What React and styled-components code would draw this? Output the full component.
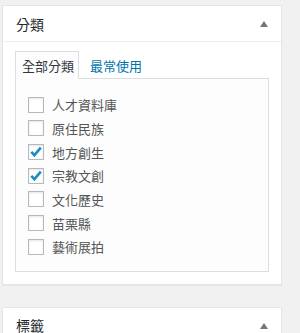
import React, { useState } from "react";
import styled, { createGlobalStyle } from "styled-components";

const GlobalStyle = createGlobalStyle`
  html, body {
    margin: 0;
    padding: 0;
    background: #f1f1f1;
    font-family: "Noto Sans CJK TC", "Noto Sans", sans-serif;
    color: #444;
  }
`;

const Page = styled.div`
  display: flex;
  flex-direction: column;
  gap: 22px;
  padding: 5px 0 0 2px;
`;

const Postbox = styled.div`
  width: 280px;
  box-sizing: border-box;
  background: #fff;
  border: 1px solid #e5e5e5;
  box-shadow: 0 1px 1px rgba(0, 0, 0, 0.04);
`;

const Header = styled.div`
  display: flex;
  align-items: center;
  justify-content: space-between;
  height: 35px;
  padding: 0 13px 0 13px;
  border-bottom: 1px solid #eee;
`;

const Title = styled.h2`
  margin: 0;
  font-size: 14px;
  font-weight: 400;
  line-height: 1;
  color: #23282d;
`;

const Toggle = styled.span`
  width: 0;
  height: 0;
  margin-top: 1px;
  border-left: 4px solid transparent;
  border-right: 4px solid transparent;
  border-bottom: 6px solid #72777c;
`;

const Inside = styled.div`
  padding: 9px 12px 12px 12px;
`;

const Tabs = styled.ul`
  display: flex;
  align-items: flex-end;
  gap: 4px;
  margin: 0;
  padding: 0;
  list-style: none;
`;

const Tab = styled.li`
  box-sizing: border-box;
  height: 28px;
  margin-bottom: -1px;
  padding: 0 4px 0 6px;
  display: flex;
  align-items: center;
  font-size: 13px;
  color: ${(p) => (p.$active ? "#32373c" : "#0073aa")};
  background: ${(p) => (p.$active ? "#fdfdfd" : "transparent")};
  border: 1px solid ${(p) => (p.$active ? "#ddd" : "transparent")};
  border-bottom-color: ${(p) => (p.$active ? "#fdfdfd" : "transparent")};
  cursor: pointer;
  position: relative;
  z-index: 1;
`;

const Panel = styled.ul`
  margin: 0;
  padding: 14px 12px 12px 12px;
  list-style: none;
  background: #fdfdfd;
  border: 1px solid #ddd;
`;

const Item = styled.li`
  display: flex;
  align-items: center;
  gap: 8px;
  height: 23.67px;
  font-size: 13px;
  color: #555;
`;

const Box = styled.span`
  box-sizing: border-box;
  width: 16px;
  height: 16px;
  flex: none;
  display: flex;
  align-items: center;
  justify-content: center;
  background: #fff;
  border: 1px solid #b4b9be;
  box-shadow: inset 0 1px 2px rgba(0, 0, 0, 0.1);
`;

const categories = [
  { name: "人才資料庫", checked: false },
  { name: "原住民族", checked: false },
  { name: "地方創生", checked: true },
  { name: "宗教文創", checked: true },
  { name: "文化歷史", checked: false },
  { name: "苗栗縣", checked: false },
  { name: "藝術展拍", checked: false },
];

const Check = () => (
  <svg width="14" height="14" viewBox="0 0 14 14">
    <path
      d="M2.3 6.8 L5.4 10.2 L11.8 2.6"
      fill="none"
      stroke="#1e8cbe"
      strokeWidth="2.6"
      strokeLinejoin="miter"
    />
  </svg>
);

export default function App() {
  const [items, setItems] = useState(categories);
  const toggle = (i) =>
    setItems(items.map((c, j) => (j === i ? { ...c, checked: !c.checked } : c)));

  return (
    <>
      <GlobalStyle />
      <Page>
        <Postbox>
          <Header>
            <Title>分類</Title>
            <Toggle />
          </Header>
          <Inside>
            <Tabs>
              <Tab $active>全部分類</Tab>
              <Tab>最常使用</Tab>
            </Tabs>
            <Panel>
              {items.map((c, i) => (
                <Item key={c.name} onClick={() => toggle(i)}>
                  <Box>{c.checked && <Check />}</Box>
                  {c.name}
                </Item>
              ))}
            </Panel>
          </Inside>
        </Postbox>
        <Postbox>
          <Header>
            <Title>標籤</Title>
            <Toggle />
          </Header>
        </Postbox>
      </Page>
    </>
  );
}
